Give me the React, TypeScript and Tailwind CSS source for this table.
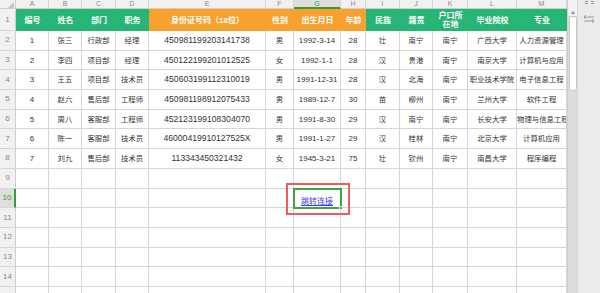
import React from 'react';

const cols = [
  { l: 'A', w: 33 },
  { l: 'B', w: 33 },
  { l: 'C', w: 34 },
  { l: 'D', w: 33 },
  { l: 'E', w: 117 },
  { l: 'F', w: 28 },
  { l: 'G', w: 47 },
  { l: 'H', w: 25 },
  { l: 'I', w: 34 },
  { l: 'J', w: 33 },
  { l: 'K', w: 35 },
  { l: 'L', w: 49 },
  { l: 'M', w: 50 },
];

const heads = ['编号', '姓名', '部门', '职务', '身份证号码（18位）', '性别', '出生月日', '年龄', '民族', '籍贯', '户口所在地', '毕业院校', '专业'];

const rows = [
  ['1', '张三', '行政部', '经理', '450981199203141738', '男', '1992-3-14', '28', '壮', '南宁', '南宁', '广西大学', '人力资源管理'],
  ['2', '李四', '项目部', '经理', '450122199201012525', '女', '1992-1-1', '28', '汉', '贵港', '南宁', '南京大学', '计算机与应用'],
  ['3', '王五', '项目部', '技术员', '450603199112310019', '男', '1991-12-31', '28', '汉', '北海', '南宁', '职业技术学院', '电子信息工程'],
  ['4', '赵六', '售后部', '工程师', '450981198912075433', '男', '1989-12-7', '30', '苗', '柳州', '南宁', '兰州大学', '软件工程'],
  ['5', '周八', '客服部', '工程师', '452123199108304070', '男', '1991-8-30', '29', '汉', '南宁', '南宁', '长安大学', '物理与信息工程'],
  ['6', '陈一', '客服部', '技术员', '46000419910127525X', '男', '1991-1-27', '29', '汉', '桂林', '南宁', '北京大学', '计算机应用'],
  ['7', '刘九', '售后部', '技术员', '113343450321432', '女', '1945-3-21', '75', '壮', '钦州', '南宁', '南昌大学', '程序编程'],
];

const numCols = [0, 4, 6, 7];

function RowHead({ n, active }: { n: number; active?: boolean }) {
  return (
    <div
      className={
        'w-[16px] shrink-0 flex items-center justify-center text-[8px] border-b border-[#d6d6d6] ' +
        (active
          ? 'bg-[#dedede] text-[#3c9a3c] border-r-2 border-r-[#3c9a3c]'
          : 'bg-[#f1f1f1] text-[#888] border-r border-r-[#cfcfcf]')
      }
    >
      {n}
    </div>
  );
}

export default function App() {
  return (
    <div
      className="relative w-[600px] h-[293px] overflow-hidden bg-white flex"
      style={{ fontFamily: '"Liberation Sans", "Noto Sans CJK SC", sans-serif' }}
    >
      {/* sheet */}
      <div className="w-[567px] shrink-0 flex flex-col">
        {/* column letters */}
        <div className="flex h-[9px] shrink-0 bg-[#f1f1f1]">
          <div className="w-[16px] shrink-0 border-r border-b border-[#cfcfcf] flex items-end justify-end pr-[1px]">
            <div className="w-0 h-0 border-l-[6px] border-l-transparent border-b-[6px] border-b-[#c4c4c4]" />
          </div>
          {cols.map((c) => (
            <div
              key={c.l}
              style={{ width: c.w }}
              className={
                'shrink-0 border-r border-[#d6d6d6] text-[7px] leading-[7px] text-center ' +
                (c.l === 'G'
                  ? 'bg-[#dedede] text-[#3c9a3c] border-b-2 border-b-[#3c9a3c]'
                  : 'text-[#8a8a8a] border-b border-b-[#cfcfcf]')
              }
            >
              {c.l}
            </div>
          ))}
        </div>

        {/* header row */}
        <div className="flex h-[22px] shrink-0">
          <RowHead n={1} />
          {cols.map((c, i) => (
            <div
              key={c.l}
              style={{ width: c.w }}
              className={
                'shrink-0 flex items-center justify-center text-center text-white font-bold text-[8px] leading-[9px] ' +
                (i >= 4 && i <= 7 ? 'bg-[#f8a12f]' : 'bg-[#26b574]')
              }
            >
              {i === 10 ? (
                <span>
                  户口所
                  <br />
                  在地
                </span>
              ) : (
                heads[i]
              )}
            </div>
          ))}
        </div>

        {/* data rows */}
        {rows.map((r, ri) => (
          <div key={ri} className="flex h-[19.7px] shrink-0">
            <RowHead n={ri + 2} />
            {r.map((v, ci) => (
              <div
                key={ci}
                style={{ width: cols[ci].w }}
                className={
                  'shrink-0 border-r border-b border-[#d6d6d6] text-center whitespace-nowrap overflow-hidden text-[#333] leading-[19px] ' +
                  (ci === 4 ? 'text-[8.6px]' : numCols.includes(ci) ? 'text-[8px]' : 'text-[7.4px]')
                }
              >
                {v}
              </div>
            ))}
          </div>
        ))}

        {/* empty rows 9-15 */}
        {[9, 10, 11, 12, 13, 14, 15].map((n) => (
          <div key={n} className="flex h-[19.7px] shrink-0">
            <RowHead n={n} active={n === 10} />
            {cols.map((c) => (
              <div
                key={c.l}
                style={{ width: c.w }}
                className="shrink-0 border-r border-b border-[#d6d6d6] text-center leading-[19px]"
              >
                {n === 10 && c.l === 'G' ? (
                  <span className="text-[8px] text-[#3b3bf0] underline">跳转连接</span>
                ) : null}
              </div>
            ))}
          </div>
        ))}
      </div>

      {/* vertical scrollbar */}
      <div className="w-[10px] shrink-0 bg-[#dcdcdc] border-l border-[#cfcfcf] flex flex-col items-center">
        <div className="h-[9px] w-full bg-[#f1f1f1]" />
        <div className="w-full bg-[#f1f1f1] flex justify-center pt-[2px] h-[7px]">
          <div className="w-0 h-0 border-l-[2px] border-r-[2px] border-b-[3px] border-l-transparent border-r-transparent border-b-[#8a8a8a]" />
        </div>
        <div className="w-[8px] h-[75px] bg-white border border-[#c8c8c8] rounded-[3px]" />
      </div>

      {/* right side panel */}
      <div className="flex-1 bg-[#ebebeb] border-l border-[#d8d8d8] flex flex-col items-center">
        <svg width="11" height="5" viewBox="0 0 11 5">
          <path d="M1 1.5h3M1 3.5h3M7 1.5h3M7 3.5h3" stroke="#9a9a9a" strokeWidth="1" />
        </svg>
        <svg width="12" height="10" viewBox="0 0 12 10" className="mt-[9px]">
          <path d="M1 3h10M1 3l2-2M1 3l2 2M1 7h10M11 7l-2-2M11 7l-2 2" stroke="#9a9a9a" strokeWidth="1" fill="none" />
        </svg>
      </div>

      {/* selected cell border G10 */}
      <div className="absolute left-[293px] top-[188px] w-[49px] h-[21px] border-2 border-[#3fa342]">
        <div className="absolute -right-[3px] -bottom-[3px] w-[4px] h-[4px] bg-[#3fa342] border border-white" />
      </div>

      {/* red annotation box */}
      <div className="absolute left-[286px] top-[183px] w-[64px] h-[32px] border-2 border-[#ee5b5f]" />
    </div>
  );
}
